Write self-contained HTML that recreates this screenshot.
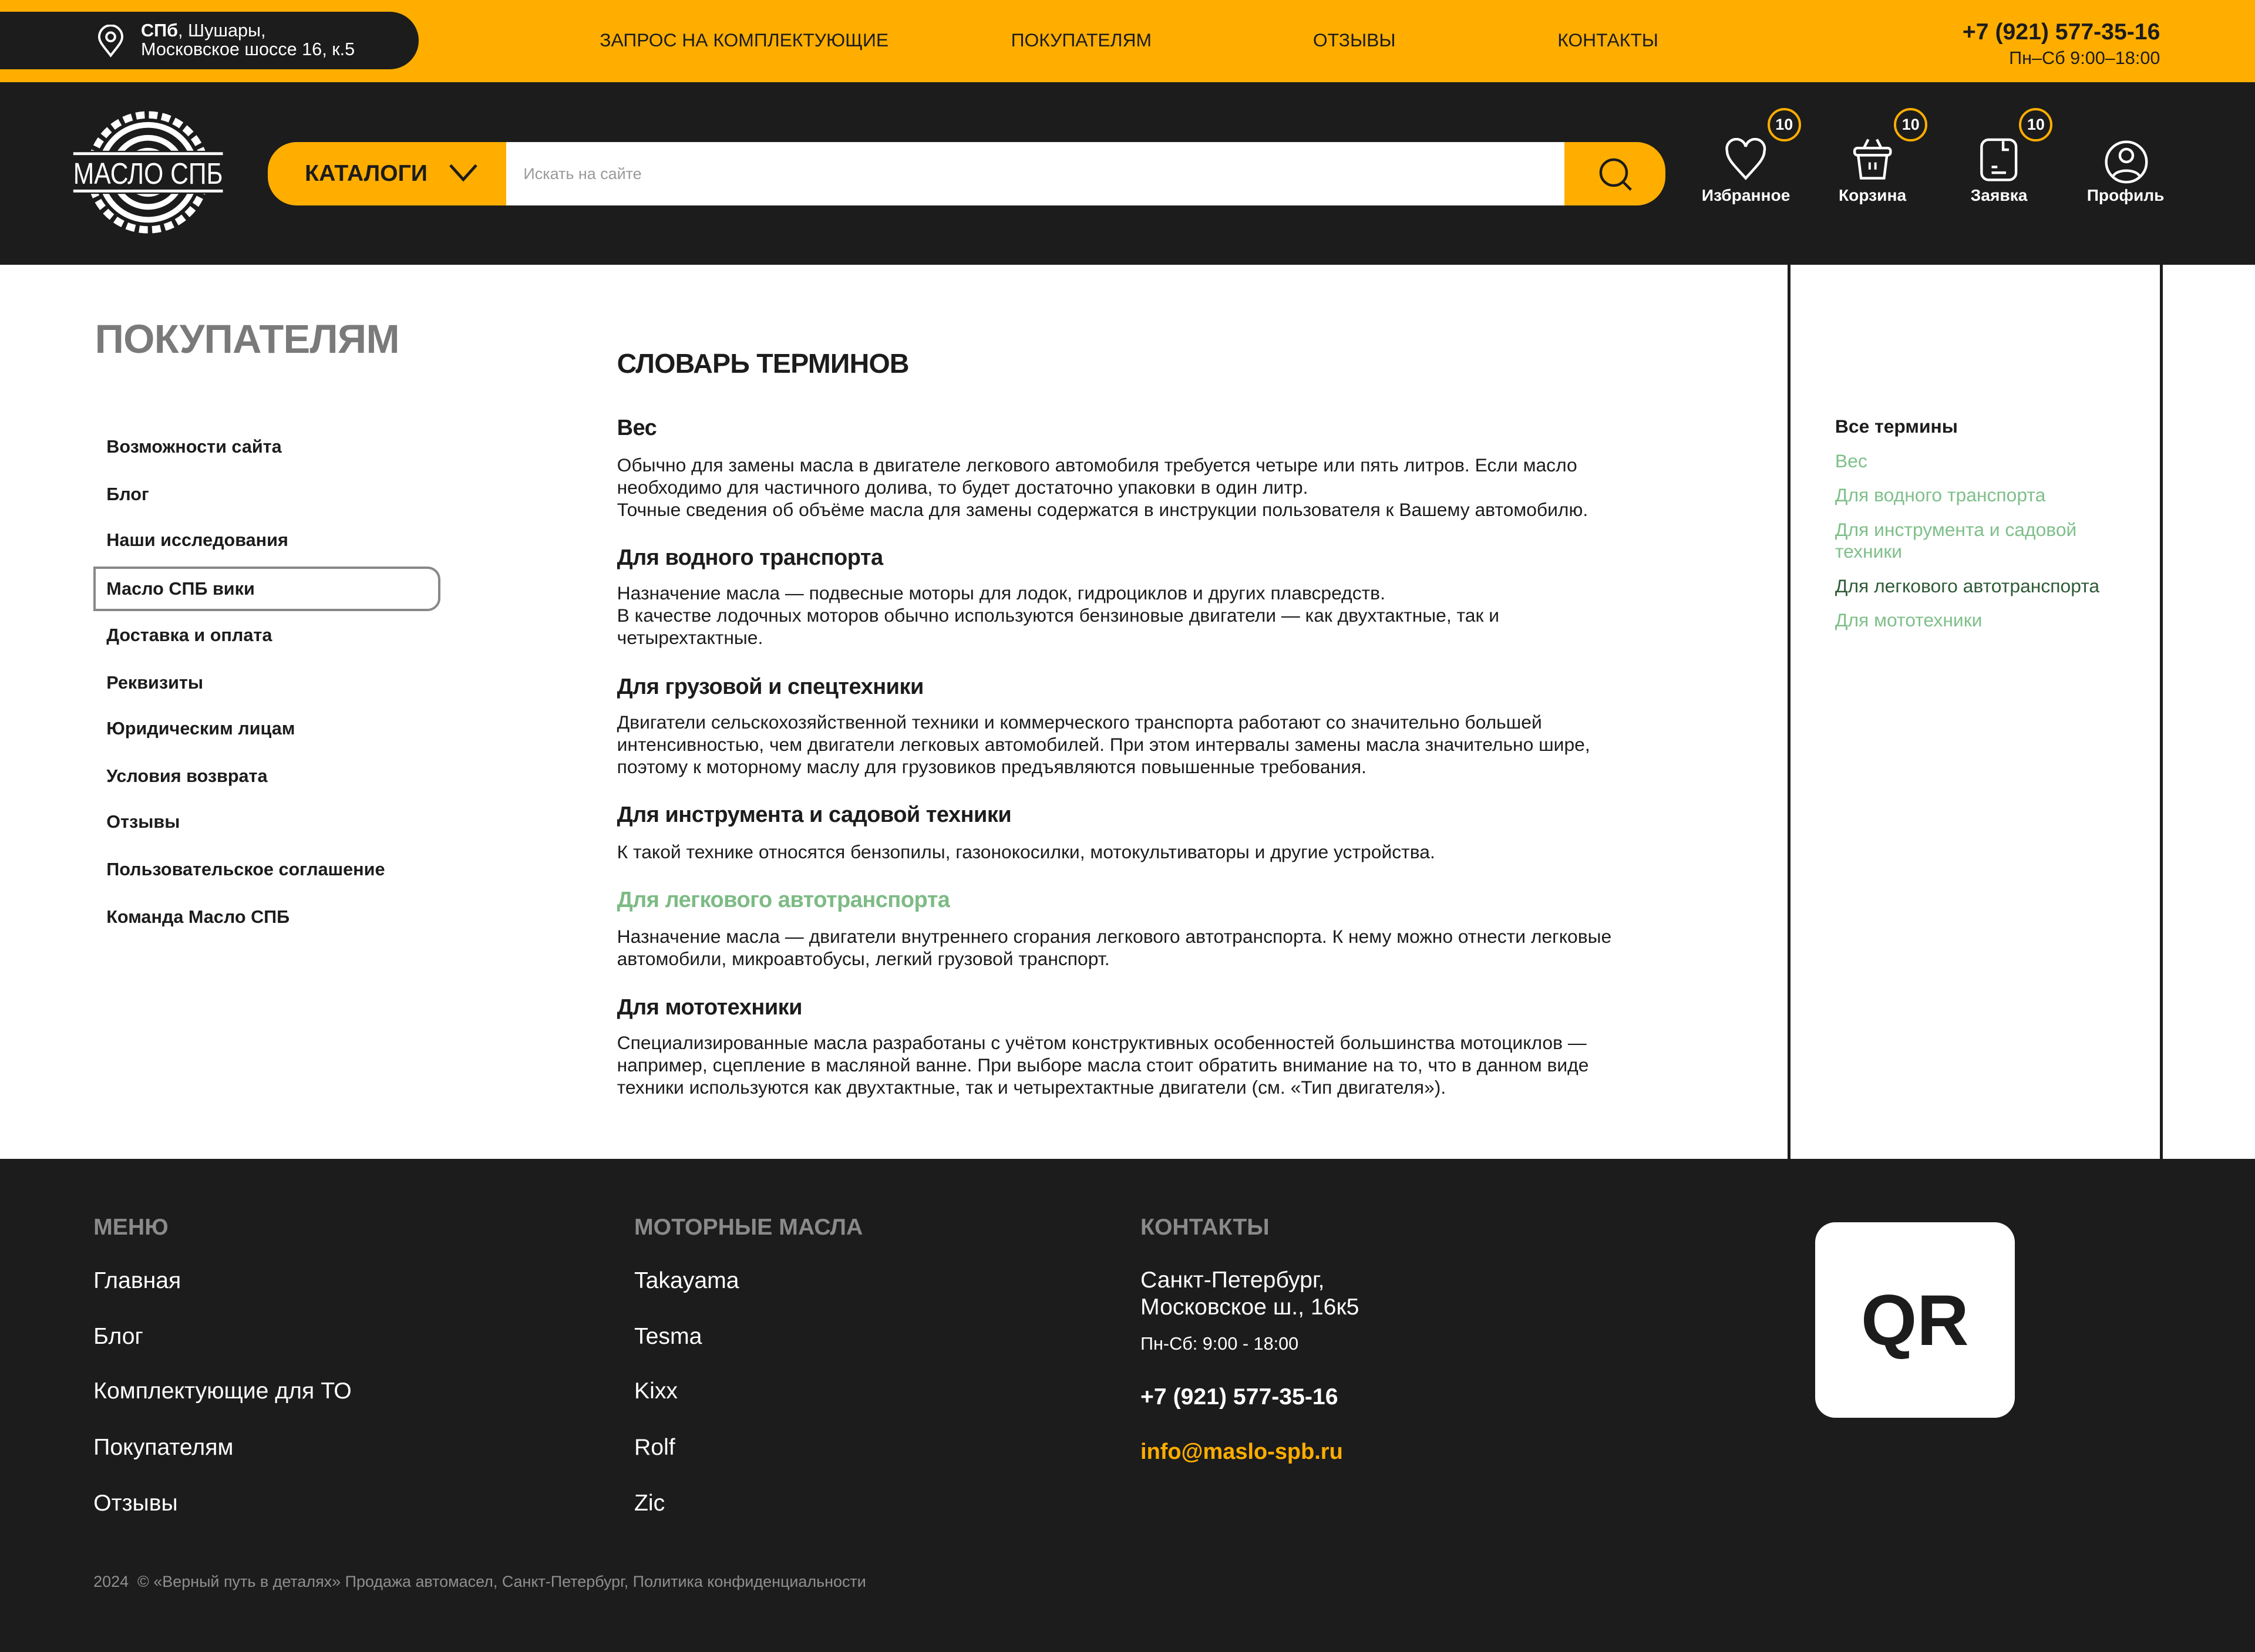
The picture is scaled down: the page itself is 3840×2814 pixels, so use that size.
<!DOCTYPE html>
<html><head><meta charset="utf-8"><style>
html,body{margin:0;padding:0;}
body{width:1568px;height:1148.2px;zoom:2.44898;position:relative;overflow:hidden;background:#fff;font-family:"Liberation Sans","Noto Sans CJK SC",sans-serif;color:#1c1c1c;}
.a{position:absolute;white-space:nowrap;}
.y{background:#FFAE00;}
.d{background:#1c1c1c;}
.nav{font-size:13px;top:20px;line-height:16px;color:#1c1c1c;}
.lab{color:#fff;font-size:11.5px;font-weight:bold;top:129px;width:80px;text-align:center;line-height:14px;}
.badge{width:20px;height:20px;border:2px solid #FFAE00;border-radius:50%;background:#1c1c1c;color:#fff;font-size:11px;font-weight:bold;text-align:center;line-height:20px;top:75px;}
.lm{left:74px;font-size:12.5px;font-weight:bold;line-height:16px;}
.h{left:429px;font-size:15.5px;font-weight:bold;line-height:20px;letter-spacing:-0.2px;}
.t{left:429px;font-size:13px;line-height:15.5px;}
.s{left:1276px;font-size:13px;line-height:15px;color:#7fbf8a;}
.fh{font-size:16px;font-weight:bold;color:#8a8a8a;line-height:20px;top:844px;}
.fi{font-size:16px;color:#fff;line-height:20px;}
</style></head><body>
<!-- top bar -->
<div class="a y" style="left:0;top:0;width:1568px;height:57px"></div>
<div class="a d" style="left:0;top:8px;width:291px;height:40px;border-radius:0 20px 20px 0"></div>
<svg class="a" style="left:67px;top:17px" width="20" height="23" viewBox="0 0 20 23"><path d="M10 21.5C5 15 2 12 2 8.5A8 8 0 0 1 18 8.5C18 12 15 15 10 21.5Z" fill="none" stroke="#fff" stroke-width="1.6"/><circle cx="10" cy="8.5" r="3" fill="none" stroke="#fff" stroke-width="1.6"/></svg>
<div class="a" style="left:98px;top:15px;color:#fff;font-size:12.5px;line-height:13px"><b>СПб</b>, Шушары,<br>Московское шоссе 16, к.5</div>
<div class="a nav" style="left:417px">ЗАПРОС НА КОМПЛЕКТУЮЩИЕ</div>
<div class="a nav" style="left:703px">ПОКУПАТЕЛЯМ</div>
<div class="a nav" style="left:913px">ОТЗЫВЫ</div>
<div class="a nav" style="left:1083px">КОНТАКТЫ</div>
<div class="a" style="right:66px;top:13px;font-size:16px;font-weight:bold;line-height:19px;text-align:right">+7 (921) 577-35-16</div>
<div class="a" style="right:66px;top:33px;font-size:12.5px;line-height:15px;text-align:right">Пн–Сб 9:00–18:00</div>
<!-- header -->
<div class="a d" style="left:0;top:57px;width:1568px;height:127px"></div>
<svg class="a" style="left:47px;top:72px" width="112" height="96" viewBox="0 0 112 96">
<g fill="none" stroke="#fff">
<circle cx="56" cy="48" r="40" stroke-width="5" stroke-dasharray="6 3"/>
<circle cx="56" cy="48" r="33" stroke-width="4"/>
<circle cx="56" cy="48" r="24" stroke-width="4"/>
<circle cx="56" cy="48" r="15" stroke-width="4"/>
</g>
<rect x="2" y="33" width="108" height="30" fill="#1c1c1c"/>
<rect x="4" y="34" width="104" height="2" fill="#fff"/>
<rect x="4" y="60" width="104" height="2" fill="#fff"/>
<text x="56" y="56" fill="#fff" font-family="Liberation Sans" font-size="21" text-anchor="middle" textLength="104" lengthAdjust="spacingAndGlyphs">МАСЛО СПБ</text>
</svg>
<div class="a y" style="left:186px;top:99px;width:170px;height:44px;border-radius:20px 0 0 20px"></div>
<div class="a" style="left:212px;top:111px;font-size:16px;font-weight:bold;line-height:20px">КАТАЛОГИ</div>
<svg class="a" style="left:311px;top:112px" width="22" height="16" viewBox="0 0 22 16"><path d="M2 3L11 13L20 3" fill="none" stroke="#1c1c1c" stroke-width="2"/></svg>
<div class="a" style="left:352px;top:99px;width:736px;height:44px;background:#fff"></div>
<div class="a" style="left:364px;top:114px;font-size:11px;color:#9a9a9a;line-height:14px">Искать на сайте</div>
<div class="a y" style="left:1088px;top:99px;width:70px;height:44px;border-radius:0 20px 20px 0"></div>
<svg class="a" style="left:1111px;top:109px" width="26" height="26" viewBox="0 0 26 26"><circle cx="11" cy="11" r="9" fill="none" stroke="#1c1c1c" stroke-width="1.8"/><path d="M18 18L23 23" stroke="#1c1c1c" stroke-width="1.8"/></svg>
<!-- icons -->
<svg class="a" style="left:1199px;top:96px" width="30" height="30" viewBox="0 0 30 30"><path d="M15 28C8 20 2 15 2 9A6.5 6.5 0 0 1 15 6A6.5 6.5 0 0 1 28 9C28 15 22 20 15 28Z" fill="none" stroke="#fff" stroke-width="1.8"/></svg>
<svg class="a" style="left:1287px;top:96px" width="30" height="30" viewBox="0 0 30 30"><path d="M9 7L12 1M21 7L18 1" stroke="#fff" stroke-width="1.8" fill="none"/><rect x="2.5" y="7" width="25" height="5" rx="2" fill="none" stroke="#fff" stroke-width="1.8"/><path d="M5 12L7 28H23L25 12" fill="none" stroke="#fff" stroke-width="1.8"/><path d="M13 17V22M17 17V22" stroke="#fff" stroke-width="1.6"/></svg>
<svg class="a" style="left:1375px;top:95px" width="30" height="32" viewBox="0 0 30 32"><rect x="3" y="2" width="24" height="28" rx="5" fill="none" stroke="#fff" stroke-width="1.8"/><path d="M18 3V9H22M10 21H14M10 25H20" fill="none" stroke="#fff" stroke-width="1.8"/></svg>
<svg class="a" style="left:1463px;top:97px" width="31" height="31" viewBox="0 0 31 31"><circle cx="15.5" cy="15.5" r="14" fill="none" stroke="#fff" stroke-width="1.8"/><circle cx="15.5" cy="11" r="4.5" fill="none" stroke="#fff" stroke-width="1.8"/><path d="M6 26C8 20 23 20 25 26" fill="none" stroke="#fff" stroke-width="1.8"/></svg>
<div class="a lab" style="left:1174px">Избранное</div>
<div class="a lab" style="left:1262px">Корзина</div>
<div class="a lab" style="left:1350px">Заявка</div>
<div class="a lab" style="left:1438px">Профиль</div>
<div class="a badge" style="left:1229px">10</div>
<div class="a badge" style="left:1317px">10</div>
<div class="a badge" style="left:1404px">10</div>
<!-- content -->
<div class="a" style="left:1243px;top:184px;width:2px;height:622px;background:#1c1c1c"></div>
<div class="a" style="left:1502px;top:184px;width:2px;height:622px;background:#1c1c1c"></div>
<div class="a" style="left:66px;top:219px;font-size:28px;font-weight:bold;color:#7a7a7a;line-height:34px;letter-spacing:-0.3px">ПОКУПАТЕЛЯМ</div>
<div class="a" style="left:65px;top:394px;width:238px;height:28px;border:2px solid #888;border-radius:0 9px 9px 0"></div>
<div class="a lm" style="top:303px">Возможности сайта</div>
<div class="a lm" style="top:336px">Блог</div>
<div class="a lm" style="top:368px">Наши исследования</div>
<div class="a lm" style="top:402px">Масло СПБ вики</div>
<div class="a lm" style="top:434px">Доставка и оплата</div>
<div class="a lm" style="top:467px">Реквизиты</div>
<div class="a lm" style="top:499px">Юридическим лицам</div>
<div class="a lm" style="top:532px">Условия возврата</div>
<div class="a lm" style="top:564px">Отзывы</div>
<div class="a lm" style="top:597px">Пользовательское соглашение</div>
<div class="a lm" style="top:630px">Команда Масло СПБ</div>

<div class="a" style="left:429px;top:241px;font-size:19px;font-weight:bold;line-height:24px;letter-spacing:-0.3px">СЛОВАРЬ ТЕРМИНОВ</div>
<div class="a h" style="top:288px">Вес</div>
<div class="a t" style="top:316px">Обычно для замены масла в двигателе легкового автомобиля требуется четыре или пять литров. Если масло<br>необходимо для частичного долива, то будет достаточно упаковки в один литр.<br>Точные сведения об объёме масла для замены содержатся в инструкции пользователя к Вашему автомобилю.</div>
<div class="a h" style="top:378px">Для водного транспорта</div>
<div class="a t" style="top:405px">Назначение масла — подвесные моторы для лодок, гидроциклов и других плавсредств.<br>В качестве лодочных моторов обычно используются бензиновые двигатели — как двухтактные, так и<br>четырехтактные.</div>
<div class="a h" style="top:468px">Для грузовой и спецтехники</div>
<div class="a t" style="top:495px">Двигатели сельскохозяйственной техники и коммерческого транспорта работают со значительно большей<br>интенсивностью, чем двигатели легковых автомобилей. При этом интервалы замены масла значительно шире,<br>поэтому к моторному маслу для грузовиков предъявляются повышенные требования.</div>
<div class="a h" style="top:557px">Для инструмента и садовой техники</div>
<div class="a t" style="top:585px">К такой технике относятся бензопилы, газонокосилки, мотокультиваторы и другие устройства.</div>
<div class="a h" style="top:616px;color:#7dbb85">Для легкового автотранспорта</div>
<div class="a t" style="top:644px">Назначение масла — двигатели внутреннего сгорания легкового автотранспорта. К нему можно отнести легковые<br>автомобили, микроавтобусы, легкий грузовой транспорт.</div>
<div class="a h" style="top:691px">Для мототехники</div>
<div class="a t" style="top:718px">Специализированные масла разработаны с учётом конструктивных особенностей большинства мотоциклов —<br>например, сцепление в масляной ванне. При выборе масла стоит обратить внимание на то, что в данном виде<br>техники используются как двухтактные, так и четырехтактные двигатели (см. «Тип двигателя»).</div>

<div class="a s" style="top:289px;color:#1c1c1c;font-weight:bold">Все термины</div>
<div class="a s" style="top:313px">Вес</div>
<div class="a s" style="top:337px">Для водного транспорта</div>
<div class="a s" style="top:361px">Для инструмента и садовой<br>техники</div>
<div class="a s" style="top:400px;color:#2f5a37">Для легкового автотранспорта</div>
<div class="a s" style="top:424px">Для мототехники</div>
<!-- footer -->
<div class="a d" style="left:0;top:806px;width:1568px;height:343px"></div>
<div class="a fh" style="left:65px">МЕНЮ</div>
<div class="a fh" style="left:441px">МОТОРНЫЕ МАСЛА</div>
<div class="a fh" style="left:793px">КОНТАКТЫ</div>
<div class="a fi" style="left:65px;top:881px">Главная</div>
<div class="a fi" style="left:65px;top:920px">Блог</div>
<div class="a fi" style="left:65px;top:958px">Комплектующие для ТО</div>
<div class="a fi" style="left:65px;top:997px">Покупателям</div>
<div class="a fi" style="left:65px;top:1036px">Отзывы</div>
<div class="a fi" style="left:441px;top:881px">Takayama</div>
<div class="a fi" style="left:441px;top:920px">Tesma</div>
<div class="a fi" style="left:441px;top:958px">Kixx</div>
<div class="a fi" style="left:441px;top:997px">Rolf</div>
<div class="a fi" style="left:441px;top:1036px">Zic</div>
<div class="a fi" style="left:793px;top:881px;line-height:19px">Санкт-Петербург,<br>Московское ш., 16к5</div>
<div class="a fi" style="left:793px;top:927px;font-size:12.5px;line-height:16px">Пн-Сб: 9:00 - 18:00</div>
<div class="a fi" style="left:793px;top:962px;font-weight:bold">+7 (921) 577-35-16</div>
<div class="a fi" style="left:793px;top:1000px;font-weight:bold;color:#FFAE00;font-size:15.5px">info@maslo-spb.ru</div>
<div class="a" style="left:1262px;top:850px;width:139px;height:136px;background:#fff;border-radius:14px;text-align:center;line-height:136px;font-size:50px;font-weight:bold;color:#1c1c1c">QR</div>
<div class="a" style="left:65px;top:1093px;font-size:11px;color:#8f8f8f;line-height:14px">2024 &nbsp;© «Верный путь в деталях» Продажа автомасел, Санкт-Петербург, Политика конфиденциальности</div>
</body></html>
